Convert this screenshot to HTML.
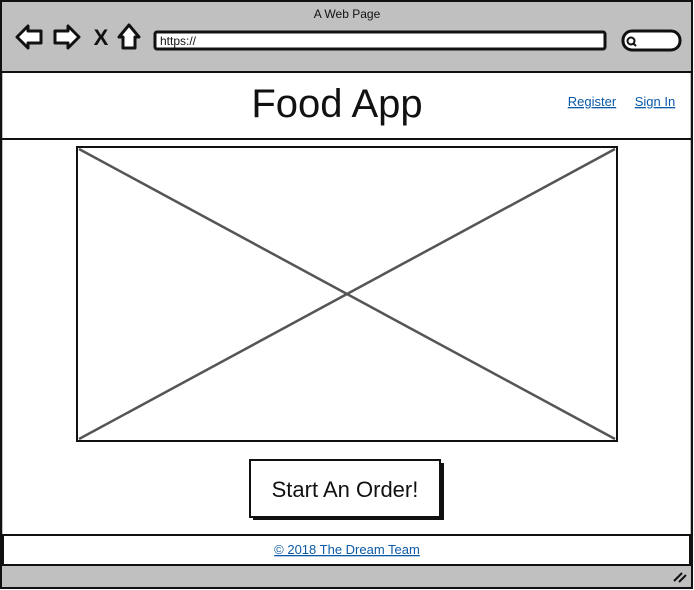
<!DOCTYPE html>
<html><head><style>
body{margin:0;width:694px;height:590px;background:#fff;overflow:hidden;font-family:"Liberation Sans",sans-serif}
svg{position:absolute;left:0;top:0}
</style></head><body>
<svg width="694" height="590" viewBox="0 0 694 590">
<rect x="1" y="1" width="691" height="587" fill="#c0c0c0" stroke="#111" stroke-width="2"/>
<rect x="3" y="72" width="687" height="493" fill="#fff"/>
<line x1="2" y1="72" x2="692" y2="72" stroke="#111" stroke-width="2"/>
<line x1="2" y1="139" x2="692" y2="139" stroke="#111" stroke-width="2"/>
<rect x="3" y="535" width="687" height="30" fill="#fff" stroke="#111" stroke-width="2"/>
<text x="347" y="18" font-size="12" text-anchor="middle" fill="#111">A Web Page</text>
<path d="M17 37 L28 26 L28 31 L41 31 L41 43 L28 43 L28 48 Z" fill="#fff" stroke="#111" stroke-width="3" stroke-linejoin="round"/>
<path d="M79 37 L68 26 L68 31 L55 31 L55 43 L68 43 L68 48 Z" fill="#fff" stroke="#111" stroke-width="3" stroke-linejoin="round"/>
<text x="101" y="45" font-size="22" font-weight="bold" text-anchor="middle" fill="#111">X</text>
<path d="M129 25 L139 37 L135 37 L135 48 L123 48 L123 37 L119 37 Z" fill="#fff" stroke="#111" stroke-width="3" stroke-linejoin="round"/>
<rect x="155" y="32" width="450" height="17" rx="2" fill="#fff" stroke="#111" stroke-width="3"/>
<text x="160" y="45" font-size="12" fill="#111">https://</text>
<rect x="623" y="31" width="57" height="19" rx="9" fill="#fff" stroke="#111" stroke-width="3"/>
<circle cx="631" cy="41" r="3.5" fill="none" stroke="#111" stroke-width="2"/>
<line x1="633" y1="43" x2="636" y2="46" stroke="#111" stroke-width="2"/>
<text x="337" y="117" font-size="40" text-anchor="middle" fill="#111">Food App</text>
<text x="592" y="106" font-size="13" text-anchor="middle" fill="#0b5aa8" text-decoration="underline">Register</text>
<text x="655" y="106" font-size="13" text-anchor="middle" fill="#0b5aa8" text-decoration="underline">Sign In</text>
<rect x="77" y="147" width="540" height="294" fill="#fff" stroke="#111" stroke-width="2"/>
<line x1="79" y1="149" x2="615" y2="439" stroke="#555" stroke-width="2.5"/>
<line x1="615" y1="149" x2="79" y2="439" stroke="#555" stroke-width="2.5"/>
<rect x="253" y="463" width="191" height="57" fill="#111"/>
<rect x="250" y="460" width="190" height="57" fill="#fff" stroke="#111" stroke-width="2"/>
<text x="345" y="497" font-size="22" text-anchor="middle" fill="#111">Start An Order!</text>
<text x="347" y="554" font-size="13" text-anchor="middle" fill="#0b5aa8" text-decoration="underline">© 2018 The Dream Team</text>
<line x1="674" y1="581" x2="682" y2="573" stroke="#111" stroke-width="2"/>
<line x1="679" y1="582" x2="686" y2="575" stroke="#111" stroke-width="2"/>
</svg>
</body></html>
